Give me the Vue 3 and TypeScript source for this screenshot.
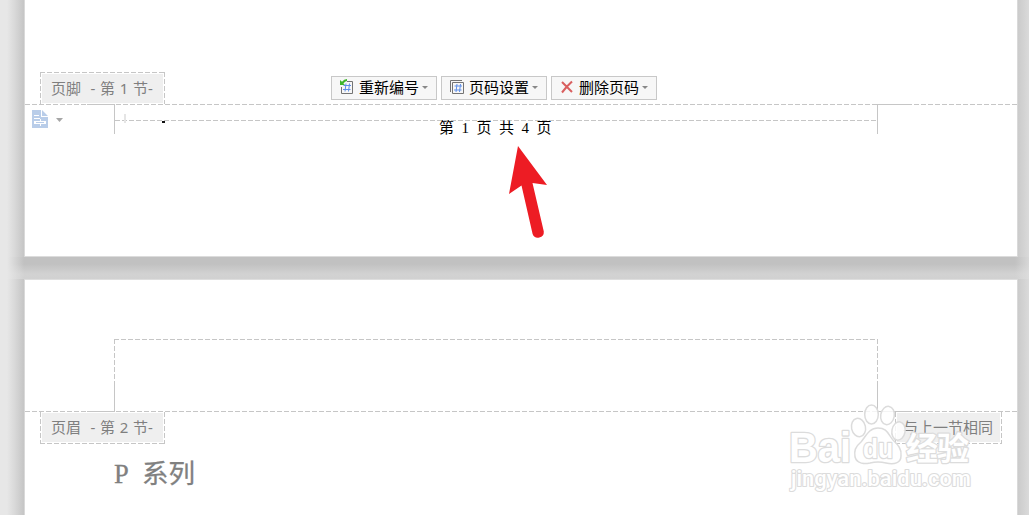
<template>
  <div class="workspace">
    <div class="side left"></div>
    <section class="page first">
      <div class="footer-tools">
        <div class="section-tag top">{{ footerTag }}</div>
        <div class="toolbar">
          <button v-for="item in tools" :key="item.icon" class="tool">
            <svg v-if="item.icon !== 'delete'" class="tool-icon" width="16" height="16" viewBox="0 0 16 16">
              <path v-if="item.icon === 'settings'" d="M1.5 13V1.5H13" class="frame" />
              <path v-if="item.icon === 'settings'" d="M3.5 3.5H14.5V14.5H3.5Z" class="frame" />
              <path v-else d="M8 2.5H13.5V14.5H2.5V8" class="frame" />
              <path v-if="item.icon === 'renumber'" d="M1 1V6H6L4.4 4.4Q6 2.4 8 2V0Q5 .2 3 2.8Z" fill="#3fb52b" />
              <path
                :transform="item.icon === 'settings' ? 'translate(1 0.5)' : ''"
                d="M7 4.5L6 12.5M10.5 4.5L9.5 12.5M4.5 6.5H12M4 10.5H11.5"
                class="hash"
              />
            </svg>
            <svg v-else class="tool-icon" width="16" height="16" viewBox="0 0 16 16">
              <path d="M3 3L13 13M13 2.5L7.5 8L3 13.5" class="cross" />
            </svg>
            <span class="label">{{ item.label }}</span>
            <i class="caret"></i>
          </button>
        </div>
      </div>
      <div class="divider"></div>
      <div class="footer-row">
        <svg class="doc-icon" width="16" height="18" viewBox="0 0 16 18">
          <path d="M0 0H9V7H16V18H0ZM10 0L16 6H10Z" fill="#b9cde9" />
          <path d="M2 5.5H7M2 8.5H8M8.5 9V16" stroke="#fff" />
          <path d="M2 11H14V14H2Z" fill="#fff" />
          <path d="M4 12.5H12" stroke="#b9cde9" />
        </svg>
        <i class="caret wide"></i>
        <div class="footer-body">
          <div class="body-line">
            <i class="mark"></i>
            <i class="dot"></i>
          </div>
          <p class="page-number">第 1 页 共 4 页</p>
        </div>
      </div>
    </section>
    <div class="side right"></div>

    <div class="gap"></div>

    <div class="side left lower"></div>
    <section class="page second">
      <div class="header-body"></div>
      <div class="divider"></div>
      <div class="header-tags">
        <div class="section-tag bottom">{{ headerTag }}</div>
        <div class="section-tag bottom same">与上一节相同</div>
      </div>
      <h1>P 系列</h1>
    </section>
    <div class="side right lower"></div>

    <svg class="pointer" width="42" height="96" viewBox="0 0 42 96">
      <path
        d="M11 2L40 41L25.5 39L36.8 87.5A5.8 5.8 0 0 1 25.6 90L14.5 41.5L2 50Z"
        fill="#ed1c24"
      />
    </svg>

    <svg class="watermark" width="200" height="110" viewBox="0 0 200 110">
      <g class="mark-shape">
        <ellipse cx="73.5" cy="27.5" rx="7" ry="9.2" transform="rotate(-12 73.5 27.5)" />
        <ellipse cx="86.5" cy="14.5" rx="6.8" ry="9.5" />
        <ellipse cx="102.5" cy="15.5" rx="6.8" ry="9.2" transform="rotate(10 102.5 15.5)" />
        <ellipse cx="113.5" cy="31" rx="6.6" ry="9.2" transform="rotate(10 113.5 31)" />
        <path
          d="M93 28C84 28 81 36 76 42C70 47 69 51 70 57C72 64 80 64 85 63Q93 61 101 63C109 65 116 63 116 56C117 49 113 45 108 40C103 34 102 28 93 28Z"
        />
      </g>
      <g class="mark-text">
        <text x="4" y="61.5" font-size="42" textLength="62" lengthAdjust="spacingAndGlyphs">Bai</text>
        <text x="78" y="57.5" font-size="28" textLength="30" lengthAdjust="spacingAndGlyphs">du</text>
        <text x="121" y="59.5" font-size="32" textLength="63">经验</text>
        <text x="6" y="86" font-size="22" class="url" textLength="180" lengthAdjust="spacingAndGlyphs">jingyan.baidu.com</text>
      </g>
    </svg>
  </div>
</template>

<script setup lang="ts">
import { ref } from 'vue'

interface Tool {
  icon: 'renumber' | 'settings' | 'delete'
  label: string
}

const tools = ref<Tool[]>([
  { icon: 'renumber', label: '重新编号' },
  { icon: 'settings', label: '页码设置' },
  { icon: 'delete', label: '删除页码' },
])

const footerTag = '页脚  - 第 1 节-'
const headerTag = '页眉  - 第 2 节-'
</script>

<style>
body {
  margin: 0;
  overflow: hidden;
}
</style>

<style scoped>
.workspace {
  --line: #c6c6c6;
  --dash-x: repeating-linear-gradient(90deg, var(--line) 0 5px, transparent 5px 7px);
  --dash-y: repeating-linear-gradient(180deg, var(--line) 0 5px, transparent 5px 7px);
  position: relative;
  display: grid;
  grid-template-columns: 25px 992px 12px;
  grid-template-rows: 257px 22px 236px;
  width: 1029px;
  height: 515px;
  overflow: hidden;
  background: #e7e7e7;
  font-family: 'Noto Sans', 'Noto Sans CJK SC', sans-serif;
}

.side.left {
  background: linear-gradient(90deg, #e7e7e7 7px, #d8d8d8 15px, #c5c5c5 24px, #d9d9d9 24px);
}

.side.right {
  background: linear-gradient(90deg, #d9d9d9 1px, #cbcbcb 1px, #dadada 12px);
}

.gap {
  grid-column: 1 / -1;
  background:
    linear-gradient(90deg, #e7e7e7 7px, rgba(231, 231, 231, 0) 24px),
    linear-gradient(270deg, rgba(225, 225, 225, 0.7), rgba(225, 225, 225, 0) 14px),
    linear-gradient(180deg, #c1c1c1 0 7px, #d2d2d2 17px, #d1d1d1);
}

.page {
  box-sizing: border-box;
  background: #fff;
}

.first {
  border-bottom: 1px solid #dcdcdc;
}

.second {
  border-top: 1px solid #dedede;
  padding-top: 59px;
}

.footer-tools {
  box-sizing: border-box;
  display: flex;
  height: 104px;
  padding: 72px 0 0 15px;
}

.section-tag {
  box-sizing: border-box;
  width: 125px;
  height: 32px;
  padding: 2px;
  color: #7f7f7f;
  font-size: 15px;
  line-height: 29px;
  text-indent: 9px;
  white-space: pre;
  word-spacing: 0.8px;
}

.section-tag.top {
  padding-bottom: 1px;
  background:
    var(--dash-x) top / 100% 1px no-repeat,
    var(--dash-y) left / 1px 100% no-repeat,
    var(--dash-y) right / 1px 100% no-repeat,
    linear-gradient(#efefef, #efefef) content-box;
}

.section-tag.bottom {
  padding-top: 1px;
  background:
    var(--dash-x) bottom / 100% 1px no-repeat,
    var(--dash-y) left / 1px 100% no-repeat,
    var(--dash-y) right / 1px 100% no-repeat,
    linear-gradient(#efefef, #efefef) content-box;
}

.section-tag.same {
  width: 107px;
  text-indent: 6px;
}

.toolbar {
  display: flex;
  gap: 4px;
  margin: 4px 0 0 166px;
}

.tool {
  box-sizing: border-box;
  display: flex;
  align-items: center;
  width: 106px;
  height: 24px;
  padding: 0 0 0 7px;
  border: 1px solid #c8c8c8;
  background: #f7f7f7;
  color: #000;
  font: 15px 'Noto Sans CJK SC', sans-serif;
  line-height: 22px;
  white-space: nowrap;
}

.tool-icon {
  flex: none;
  margin: -3px 4px 0 0;
}

.label {
  margin-top: -2px;
}

.frame {
  fill: none;
  stroke: #747474;
}

.hash {
  fill: none;
  stroke: #5f8fe8;
}

.cross {
  fill: none;
  stroke: #d95f5f;
  stroke-width: 2;
}

.caret {
  flex: none;
  width: 6px;
  height: 3px;
  margin: -1px 0 0 3px;
  background: #888;
  clip-path: polygon(0 0, 100% 0, 50% 100%);
}

.divider {
  height: 1px;
  background:
    linear-gradient(var(--line), var(--line)) 62px 0 / 28px 1px no-repeat,
    linear-gradient(var(--line), var(--line)) 852px 0 / 33px 1px no-repeat,
    var(--dash-x);
}

.footer-row {
  display: flex;
  align-items: flex-start;
  padding-left: 7px;
}

.doc-icon {
  margin-top: 5px;
}

.caret.wide {
  width: 7px;
  height: 4px;
  margin: 13px 51px 0 8px;
  background: #a6a6a6;
}

.footer-body {
  box-sizing: border-box;
  width: 764px;
  height: 29px;
  border: solid var(--line);
  border-width: 0 1px;
}

.body-line {
  display: flex;
  align-items: flex-end;
  height: 18px;
  background: var(--dash-x) 0 15px / 100% 1px no-repeat;
}

.mark {
  width: 2px;
  height: 9px;
  margin-left: 9px;
  background: #e5e5e5;
}

.dot {
  width: 3px;
  height: 2px;
  margin-left: 36px;
  background: #111;
}

.page-number {
  margin: -3px 0 0 324px;
  color: #000;
  font: 15px/17px 'Liberation Serif', 'Noto Sans CJK SC', serif;
  word-spacing: 3.75px;
}

.header-body {
  box-sizing: border-box;
  width: 764px;
  height: 72px;
  margin-left: 89px;
  background:
    linear-gradient(var(--line), var(--line)) 0 100% / 1px 30px no-repeat,
    linear-gradient(var(--line), var(--line)) 100% 100% / 1px 30px no-repeat,
    var(--dash-x) top / 100% 1px no-repeat,
    var(--dash-y) left / 1px 100% no-repeat,
    var(--dash-y) right / 1px 100% no-repeat;
}

.header-tags {
  display: flex;
  justify-content: space-between;
  padding: 0 15px;
}

h1 {
  margin: 12px 0 0 89px;
  color: #808080;
  font: 400 26.5px/36px 'Liberation Serif', 'Noto Sans CJK SC', serif;
  word-spacing: 7.5px;
  -webkit-text-stroke: 0.3px #808080;
}

.pointer {
  position: absolute;
  left: 507px;
  top: 144px;
}

.watermark {
  position: absolute;
  left: 785px;
  top: 400px;
  font-family: 'Liberation Sans', 'Noto Sans CJK SC', sans-serif;
  font-weight: 700;
}

.mark-shape {
  fill: rgba(255, 255, 255, 0.8);
  stroke: #dcdcdc;
  stroke-width: 1.5;
}

.mark-text {
  fill: #fff;
  stroke: #dcdcdc;
  stroke-width: 2.6;
  stroke-linejoin: round;
  paint-order: stroke;
}

.url {
  font-family: Roboto, sans-serif;
  font-weight: 500;
  stroke-width: 2.2;
}
</style>
